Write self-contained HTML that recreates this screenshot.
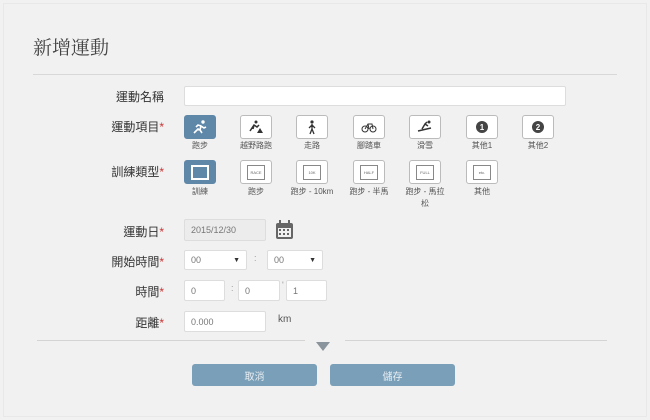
<!DOCTYPE html>
<html><head><meta charset="utf-8"><style>
body{margin:0;width:650px;height:420px;background:#f1f1f1;font-family:"Liberation Sans","Noto Sans CJK TC",sans-serif;position:relative;overflow:hidden;color:#555}
.a{position:absolute}
.t{left:33px;top:33px;font-family:"Liberation Serif","Noto Serif CJK SC",serif;font-size:19px;color:#444}
.lab{right:486px;font-size:12px;color:#333;text-align:right;white-space:nowrap}
.lab b{color:#c33;font-weight:normal}
.inp{background:#fff;border:1px solid #ddd;border-radius:2px;box-sizing:border-box;font-size:9px;color:#777;padding:0 6px;display:flex;align-items:center}
.ib{width:32px;height:24px;border:1px solid #bbb;border-radius:3px;background:#fff;box-sizing:border-box;display:flex;align-items:center;justify-content:center}
.ib.on{background:#5f87a8;border-color:#5f87a8}
.cap{font-size:8px;color:#555;text-align:center;width:70px;line-height:12px}
.btn{background:#7a9fb8;color:#e8eef3;font-size:10px;border-radius:3px;display:flex;align-items:center;justify-content:center}
.tag{width:16px;height:13px;border:1px solid #888;font-size:4px;display:flex;align-items:center;justify-content:center;color:#666}
</style></head><body>
<div class="a" style="left:3px;top:3px;right:3px;bottom:3px;border:1px solid #e8e8e8"></div>
<div class="a t">新增運動</div>
<div class="a" style="left:33px;top:74px;width:584px;height:1px;background:#d8d8d8"></div>

<div class="a lab" style="top:88px">運動名稱</div>
<div class="a inp" style="left:184px;top:86px;width:382px;height:20px"></div>

<div class="a lab" style="top:118px">運動項目<b>*</b></div>
<div class="a lab" style="top:163px">訓練類型<b>*</b></div>

<div class="a ib on" style="left:184px;top:115px"><svg width="16" height="14"><circle cx="11" cy="2" r="1.7" fill="#fff"/><path d="M2 13L6 9L8 10L9 6L12 8L14 7M9 6L6 5L4 7M8 10L10 13" stroke="#fff" stroke-width="1.6" fill="none"/></svg></div>
<div class="a ib" style="left:240px;top:115px"><svg width="16" height="14"><circle cx="8" cy="2" r="1.5" fill="#333"/><path d="M2 11L6 5L9 7L11 5M6 5L5 9" stroke="#333" stroke-width="1.5" fill="none"/><path d="M9 13L12 8L15 13Z" fill="#333"/></svg></div>
<div class="a ib" style="left:296px;top:115px"><svg width="12" height="15"><circle cx="6" cy="2" r="1.6" fill="#333"/><path d="M6 4V9L4 14M6 9L8 14M6 5L3 8M6 5L9 8" stroke="#333" stroke-width="1.3" fill="none"/></svg></div>
<div class="a ib" style="left:353px;top:115px"><svg width="16" height="12"><circle cx="4" cy="8" r="3" fill="none" stroke="#333"/><circle cx="12" cy="8" r="3" fill="none" stroke="#333"/><path d="M4 8L7 3H11L12 8M7 3L8 8" stroke="#333" fill="none"/></svg></div>
<div class="a ib" style="left:409px;top:115px"><svg width="16" height="14"><path d="M1 11L14 8M5 9L8 4L11 6M8 4L10 2" stroke="#333" stroke-width="1.5" fill="none"/><circle cx="12" cy="2" r="1.5" fill="#333"/></svg></div>
<div class="a ib" style="left:466px;top:115px"><span style="width:12px;height:12px;border-radius:50%;background:#444;color:#fff;font-size:8px;font-weight:bold;display:flex;align-items:center;justify-content:center">1</span></div>
<div class="a ib" style="left:522px;top:115px"><span style="width:12px;height:12px;border-radius:50%;background:#444;color:#fff;font-size:8px;font-weight:bold;display:flex;align-items:center;justify-content:center">2</span></div>

<div class="a cap" style="left:165px;top:140px">跑步</div>
<div class="a cap" style="left:221px;top:140px">越野路跑</div>
<div class="a cap" style="left:277px;top:140px">走路</div>
<div class="a cap" style="left:334px;top:140px">腳踏車</div>
<div class="a cap" style="left:390px;top:140px">滑雪</div>
<div class="a cap" style="left:447px;top:140px">其他1</div>
<div class="a cap" style="left:503px;top:140px">其他2</div>

<div class="a ib on" style="left:184px;top:160px"><div style="width:14px;height:11px;border:2px solid #fff;background:#5f87a8"></div></div>
<div class="a ib" style="left:240px;top:160px"><div class="tag">RACE</div></div>
<div class="a ib" style="left:296px;top:160px"><div class="tag">10K</div></div>
<div class="a ib" style="left:353px;top:160px"><div class="tag">HALF</div></div>
<div class="a ib" style="left:409px;top:160px"><div class="tag">FULL</div></div>
<div class="a ib" style="left:466px;top:160px"><div class="tag">etc.</div></div>

<div class="a cap" style="left:165px;top:186px">訓練</div>
<div class="a cap" style="left:221px;top:186px">跑步</div>
<div class="a cap" style="left:277px;top:186px">跑步 - 10km</div>
<div class="a cap" style="left:334px;top:186px">跑步 - 半馬</div>
<div class="a cap" style="left:390px;top:186px;width:70px">跑步 - 馬拉<br>松</div>
<div class="a cap" style="left:447px;top:186px">其他</div>

<div class="a lab" style="top:223px">運動日<b>*</b></div>
<div class="a inp" style="left:184px;top:219px;width:82px;height:22px;background:#ececec">2015/12/30</div>
<div class="a" style="left:275px;top:220px"><svg width="19" height="20"><rect x="1" y="3" width="17" height="16" rx="2" fill="#666"/><rect x="3" y="8" width="13" height="9" fill="#f1f1f1"/><g fill="#666"><rect x="4" y="9" width="2" height="2"/><rect x="8" y="9" width="2" height="2"/><rect x="12" y="9" width="2" height="2"/><rect x="4" y="13" width="2" height="2"/><rect x="8" y="13" width="2" height="2"/><rect x="12" y="13" width="2" height="2"/></g><rect x="4" y="0" width="2" height="5" fill="#666"/><rect x="13" y="0" width="2" height="5" fill="#666"/></svg></div>

<div class="a lab" style="top:253px">開始時間<b>*</b></div>
<div class="a inp" style="left:184px;top:250px;width:63px;height:20px;justify-content:space-between">00<span style="font-size:7px;color:#333">▼</span></div>
<div class="a" style="left:254px;top:253px;font-size:9px;color:#999">:</div>
<div class="a inp" style="left:267px;top:250px;width:56px;height:20px;justify-content:space-between">00<span style="font-size:7px;color:#333">▼</span></div>

<div class="a lab" style="top:283px">時間<b>*</b></div>
<div class="a inp" style="left:184px;top:280px;width:41px;height:21px">0</div>
<div class="a" style="left:231px;top:283px;font-size:9px;color:#999">:</div>
<div class="a inp" style="left:238px;top:280px;width:42px;height:21px">0</div>
<div class="a" style="left:282px;top:280px;font-size:9px;color:#999">'</div>
<div class="a inp" style="left:286px;top:280px;width:41px;height:21px">1</div>

<div class="a lab" style="top:314px">距離<b>*</b></div>
<div class="a inp" style="left:184px;top:311px;width:82px;height:21px">0.000</div>
<div class="a" style="left:278px;top:314px;font-size:10px;color:#555">km</div>

<div class="a" style="left:37px;top:340px;width:268px;height:1px;background:#d4d4d4"></div>
<div class="a" style="left:345px;top:340px;width:262px;height:1px;background:#d4d4d4"></div>
<div class="a" style="left:316px;top:342px;width:0;height:0;border-left:7px solid transparent;border-right:7px solid transparent;border-top:9px solid #8a949c"></div>

<div class="a btn" style="left:192px;top:364px;width:125px;height:22px">取消</div>
<div class="a btn" style="left:330px;top:364px;width:125px;height:22px">儲存</div>
</body></html>
